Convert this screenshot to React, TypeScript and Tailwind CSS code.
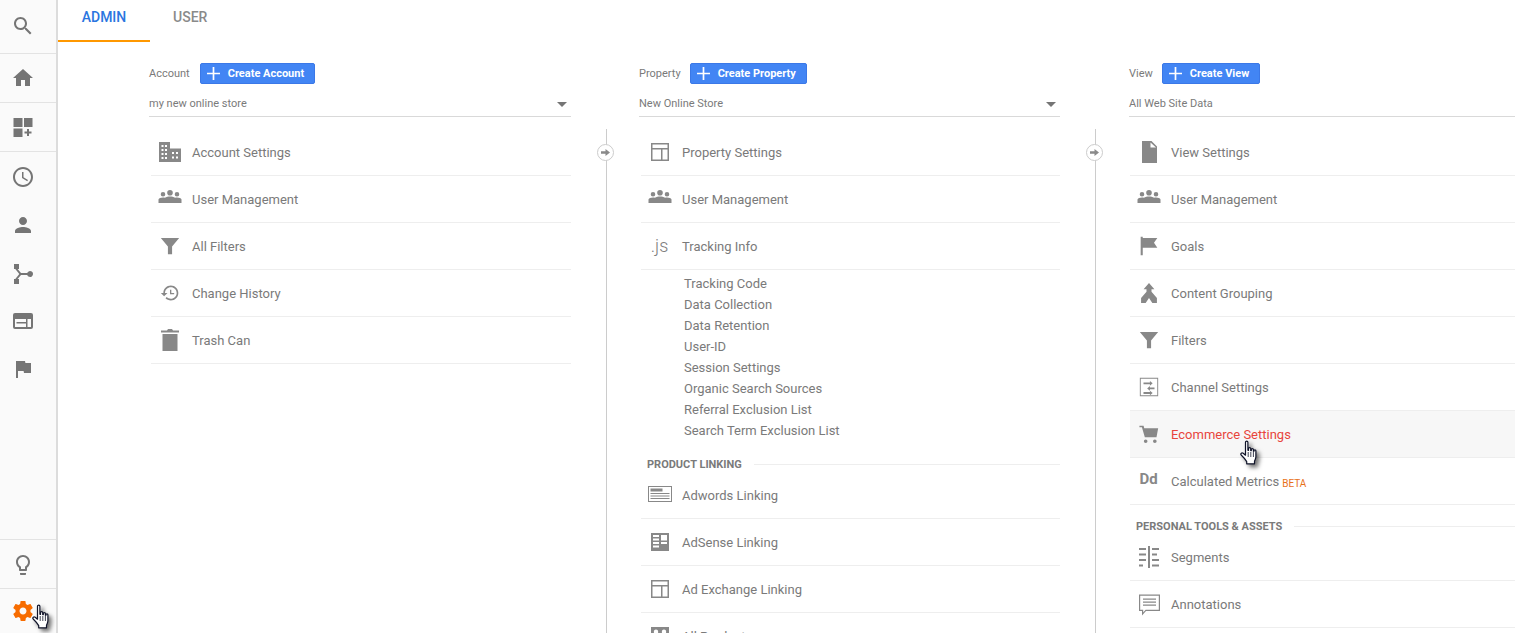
import type { ReactNode } from "react";

const FONT = "font-['Roboto','Liberation_Sans',sans-serif]";

function Icon({ className, children }: { className: string; children: ReactNode }) {
  return (
    <svg viewBox="0 0 24 24" className={className} fill="currentColor">
      {children}
    </svg>
  );
}

function HandCursor({ className }: { className: string }) {
  return (
    <svg viewBox="0 0 20 28" className={className}>
      <path
        d="M6.500 2.200c0-1.500 2.400-1.500 2.400 0v8l.6.1V8.600c0-1.300 2.200-1.300 2.200 0v2l.6.1V9.600c0-1.200 2.100-1.200 2.100 0v1.600l.5.1v-.6c0-1.200 2-1.200 2 0v6.100c0 2-1 3.200-1.400 4.600v2.400H7.700v-2.200C6.500 19.600 4.800 17.600 2.400 15.300 1 13.900 2.600 12.200 4.200 13.200L6.500 15.200z"
        fill="#ffffff"
        stroke="#10142a"
        strokeWidth="1.2"
        strokeLinejoin="round"
      />
      <path d="M9.200 12v5M11.800 12v5M14.400 12v5" stroke="#10142a" strokeWidth="0.8" />
    </svg>
  );
}

const LAYOUT = (
  <path
    fillRule="evenodd"
    d="M3 3h18v18H3zM4.500 4.500v3.500h15V4.500zM4.500 9.500V19.500H13V9.500zM14.500 9.500V19.500h5V9.500z"
  />
);

const icons: Record<string, ReactNode> = {
  building: (
    <path
      fillRule="evenodd"
      d="M1 2h11v6.500h11V22H1zM3.500 5v2h2V5zm3.500 0v2h2V5zM3.500 9v2h2V9zm3.500 0v2h2V9zM3.500 13v2h2v-2zm3.500 0v2h2v-2zM3.500 17v2h2v-2zm3.500 0v2h2v-2zm7-5v2h2v-2zm4 0v2h2v-2zm-4 4.500v2h2v-2zm4 0v2h2v-2z"
    />
  ),
  people: (
    <path d="M5 9.500a2.300 2.300 0 1 1 0-4.600 2.300 2.300 0 0 1 0 4.600zm7-1a2.800 2.800 0 1 1 0-5.600 2.800 2.800 0 0 1 0 5.600zm7 1a2.300 2.300 0 1 1 0-4.600 2.300 2.300 0 0 1 0 4.600zM0.500 16v-3.500c0-1.300 2.500-2 4.500-2 .7 0 1.300.1 1.900.2C8.300 9.800 10.300 9.500 12 9.500s3.700.3 5.100 1.200c.6-.1 1.200-.2 1.900-.2 2 0 4.500.7 4.500 2V16z" />
  ),
  filter: <path d="M1 2.500h22l-8.500 10V22h-5v-9.500z" />,
  history: (
    <path d="M13 3c-4.970 0-9 4.030-9 9H1l3.890 3.890.07.14L9 12H6c0-3.870 3.130-7 7-7s7 3.130 7 7-3.130 7-7 7c-1.930 0-3.680-.79-4.940-2.060l-1.420 1.420C8.270 19.990 10.510 21 13 21c4.970 0 9-4.030 9-9s-4.030-9-9-9zm-1 5v5.500h5v-1.600h-3.400V8z" />
  ),
  trash: <path d="M4.500 6h15v17h-15zM3 2.500h6L10 1h4l1 1.500h6V4.500H3z" />,
  layout: LAYOUT,
  file: <path d="M5 1h9.500L20 6.500V23H5zM13.500 2.500V7.500H19z" fillRule="evenodd" />,
  flag: <path d="M2 1h2.500v1.500L22 2.500l-4 5.500 4 6H4.500V23H2z" />,
  merge: (
    <path d="M12 0l6.500 7.500H15v3l6.500 7.500V24h-5.500L12 18l-4 6H2.500v-6L9 10.500v-3H5.500z" />
  ),
  channel: (
    <>
      <path fillRule="evenodd" d="M2 2h20v20H2zM3 3v18h18V3z" />
      <path d="M6 7h7V5.500l3 2.500-3 2.500V9H6zM18 12.500h-5V11l-3 2.500L13 16v-1.500h5zM6 17.500h7V16l3 2.500-3 2.500V19.500H6z" />
    </>
  ),
  cart: (
    <path d="M0.500 2h5l.8 3H23l-2 11H7L3.500 4H.5zM8 18.500a2.200 2.200 0 1 1 0 4.400 2.200 2.200 0 0 1 0-4.400zm11 0a2.200 2.200 0 1 1 0 4.400 2.200 2.200 0 0 1 0-4.400z" />
  ),
  segments: (
    <path d="M11 1h2v22h-2zM2 3h7v2H2zM2 8.500h7v2H2zM2 14h7v2H2zM2 19.500h4v2H2zM15 3h7v2h-7zM15 8.500h5v2h-5zM15 14h7v2h-7zM15 19.500h7v2h-7z" />
  ),
  note: (
    <path
      fillRule="evenodd"
      d="M2 2.500h21V19H9L5 23.500V19H2zM3.200 3.700V17.800h3V20.500l2.400-2.700H21.800V3.700zM6 6.500h13v1.300H6zM6 9.500h13v1.300H6zM6 12.500h13v1.300H6z"
    />
  ),
  adwords: (
    <path
      fillRule="evenodd"
      d="M0 3h24v16H0zM1 4v14h22V4zM2.500 5.500h12v3h-12zM2.500 10h19v1h-19zM2.500 12.500h19v1h-19zM2.500 15h19v1h-19z"
    />
  ),
  adsense: (
    <path
      fillRule="evenodd"
      d="M3 3h18v18H3zM5 5v2h6V5zM5 8.500v2h6v-2zM5 12v2h6v-2zM5 15.500v2h6v-2zM13 5v5.500h6V5zM13 12v2h6v-2z"
    />
  ),
  products: (
    <path fillRule="evenodd" d="M3 3h18v18H3zM8 5.500a2.200 2.200 0 1 0 0 4.400 2.200 2.200 0 0 0 0-4.400zm8 0a2.200 2.200 0 1 0 0 4.400 2.200 2.200 0 0 0 0-4.400z" />
  ),
};

type Row = { label: string; icon?: ReactNode; active?: boolean; beta?: boolean };

function NavRow({ label, icon, active, beta }: Row) {
  return (
    <div
      className={`flex h-[47px] items-center border-b border-[#eeeeee] pl-px ${active ? "bg-[#f7f7f7]" : ""}`}
    >
      <div className="flex w-[35px] justify-center text-[#888888]">{icon}</div>
      <span className={`ml-[5px] pt-[2px] text-[13px] ${active ? "text-[#e8453c]" : "text-[#7a7a7a]"}`}>
        {label}
      </span>
      {beta && <span className="ml-[3px] mt-[4px] text-[10px] text-[#e8711a]">BETA</span>}
    </div>
  );
}

function Head({
  label,
  button,
  value,
  caret,
  gap = "gap-[10px]",
}: {
  label: string;
  button: string;
  value: string;
  caret?: boolean;
  gap?: string;
}) {
  return (
    <div>
      <div className={`flex h-[21px] items-center ${gap}`}>
        <span className="pt-[2px] text-[11px] text-[#7a7a7a]">{label}</span>
        <button className="flex h-[21px] items-center rounded-[2px] border border-[#3b78e7] bg-[#4285f4] pl-[6px] pr-[10px] text-[11px] font-bold text-white">
          <svg viewBox="0 0 13 13" className="mr-[8px] h-[13px] w-[13px]" stroke="#ffffff" strokeWidth="1.700">
            <path d="M6.500 0v13M0 6.500h13" />
          </svg>
          <span className="pt-[2px]">{button}</span>
        </button>
      </div>
      <div className="mt-[9px] flex h-[24px] items-center justify-between border-b border-[#d9d9d9] pr-[4px]">
        <span className="text-[11px] text-[#7a7a7a]">{value}</span>
        {caret && <div className="h-0 w-0 border-x-[5px] border-t-[5px] border-x-transparent border-t-[#757575]" />}
      </div>
    </div>
  );
}

function SectionLabel({ label, className }: { label: string; className: string }) {
  return (
    <div className={`flex items-center gap-[12px] pl-[6px] ${className}`}>
      <span className="whitespace-nowrap text-[11px] font-bold leading-none text-[#7a7a7a]">{label}</span>
      <div className="h-px flex-1 bg-[#eeeeee]" />
    </div>
  );
}

function Connector() {
  return (
    <div className="relative mt-[129px] w-[68px] shrink-0">
      <div className="ml-[35px] h-[504px] w-px bg-[#cccccc]" />
      <div className="absolute left-[26px] top-[15px] flex h-[17px] w-[17px] items-center justify-center rounded-full border border-[#cccccc] bg-white">
        <svg viewBox="0 0 10 10" className="h-[9px] w-[9px]" fill="#8a8a8a">
          <path d="M0 3.500h5V1l5 4-5 4V6.500H0z" />
        </svg>
      </div>
    </div>
  );
}

const big = "h-[24px] w-[24px]";
const mid = "h-[20px] w-[20px]";

function SideIcon({ className, children }: { className: string; children: ReactNode }) {
  return <div className={`flex items-center justify-center pr-[10px] ${className}`}>{children}</div>;
}

export default function App() {
  const sub = [
    "Tracking Code",
    "Data Collection",
    "Data Retention",
    "User-ID",
    "Session Settings",
    "Organic Search Sources",
    "Referral Exclusion List",
    "Search Term Exclusion List",
  ];

  return (
    <div className={`flex h-[633px] w-[1515px] overflow-hidden bg-white ${FONT}`}>
      <aside className="relative flex h-full w-[58px] shrink-0 flex-col border-r-2 border-[#dcdcdc] bg-[#fafafa] text-[#757575]">
        <SideIcon className="h-[54px] border-b border-[#e3e3e3] pb-[2px]">
          <Icon className={big}>
            <path d="M15.500 14h-.79l-.28-.27C15.410 12.590 16 11.110 16 9.500 16 5.910 13.090 3 9.500 3S3 5.910 3 9.500 5.910 16 9.500 16c1.610 0 3.090-.59 4.230-1.570l.27.28v.79l5 4.990L20.490 19l-4.990-5zm-6 0C7.010 14 5 11.990 5 9.500S7.010 5 9.500 5 14 7.010 14 9.500 11.990 14 9.500 14z" />
          </Icon>
        </SideIcon>
        <SideIcon className="h-[49px] border-b border-[#e3e3e3]">
          <Icon className={big}>
            <path d="M10 20v-6h4v6h5v-8h3L12 3 2 12h3v8z" />
          </Icon>
        </SideIcon>
        <SideIcon className="h-[49px] border-b border-[#e3e3e3]">
          <Icon className={big}>
            <path d="M2.500 3h9v9h-9zM13 3h8.500v9H13zM2.500 13.500h9V22h-9zM16 14h2v2.500h2.500v2H18V21h-2v-2.500h-2.500v-2H16z" />
          </Icon>
        </SideIcon>
        <SideIcon className="h-[49px]">
          <Icon className={big}>
            <path d="M11.990 2C6.470 2 2 6.480 2 12s4.470 10 9.990 10C17.520 22 22 17.520 22 12S17.520 2 11.990 2zM12 20c-4.420 0-8-3.580-8-8s3.580-8 8-8 8 3.580 8 8-3.580 8-8 8z" />
            <path d="M12.500 7H11v6l5.250 3.150.75-1.230-4.500-2.670z" />
          </Icon>
        </SideIcon>
        <SideIcon className="h-[48px]">
          <Icon className={big}>
            <path d="M12 12c2.210 0 4-1.790 4-4s-1.790-4-4-4-4 1.790-4 4 1.790 4 4 4zm0 2c-2.670 0-8 1.340-8 4v2h16v-2c0-2.660-5.330-4-8-4z" />
          </Icon>
        </SideIcon>
        <SideIcon className="h-[48px]">
          <Icon className={big}>
            <path d="M3 3h5v5H6.600L10 12h6.200a3 3 0 1 1 0 2H10l-3.400 4H8v5H3v-5h1.300l4-5-4-5H3z" />
          </Icon>
        </SideIcon>
        <SideIcon className="h-[48px]">
          <Icon className={big}>
            <path
              fillRule="evenodd"
              d="M4 4h16a2 2 0 0 1 2 2v12a2 2 0 0 1-2 2H4a2 2 0 0 1-2-2V6a2 2 0 0 1 2-2zM4 10v8h11v-3.500H5.500V13H15v-3zM16.500 10v8H20v-8z"
            />
          </Icon>
        </SideIcon>
        <SideIcon className="h-[48px]">
          <Icon className={big}>
            <path d="M14.400 6L14 4H5v17h2v-7h5.600l.4 2h7V6z" />
          </Icon>
        </SideIcon>
        <div className="flex-1 border-b border-[#e3e3e3]" />
        <SideIcon className="h-[49px] border-b border-[#e3e3e3] pt-[2px]">
          <Icon className={big}>
            <path d="M9 21c0 .55.45 1 1 1h4c.55 0 1-.45 1-1v-1H9v1zm3-19C8.140 2 5 5.140 5 9c0 2.380 1.190 4.470 3 5.740V17c0 .55.45 1 1 1h6c.55 0 1-.45 1-1v-2.260c1.810-1.270 3-3.360 3-5.740 0-3.860-3.140-7-7-7zm2.850 11.100l-.85.6V16h-4v-2.300l-.85-.6C7.800 12.160 7 10.630 7 9c0-2.760 2.240-5 5-5s5 2.240 5 5c0 1.630-.8 3.160-2.150 4.100z" />
          </Icon>
        </SideIcon>
        <SideIcon className="h-[44px] text-[#f76c00]">
          <Icon className={big}>
            <path d="M19.430 12.980c.04-.32.07-.64.07-.98s-.03-.66-.07-.98l2.110-1.650c.19-.15.24-.42.12-.64l-2-3.460c-.12-.22-.39-.3-.61-.22l-2.490 1c-.52-.4-1.080-.73-1.690-.98l-.38-2.650C14.460 2.180 14.250 2 14 2h-4c-.25 0-.46.18-.49.42l-.38 2.650c-.61.25-1.170.59-1.690.98l-2.490-1c-.23-.09-.49 0-.61.22l-2 3.460c-.13.22-.07.49.12.64l2.110 1.650c-.04.32-.07.65-.07.98s.03.66.07.98l-2.110 1.650c-.19.15-.24.42-.12.64l2 3.460c.12.22.39.3.61.22l2.490-1c.52.4 1.080.73 1.690.98l.38 2.650c.03.24.24.42.49.42h4c.25 0 .46-.18.49-.42l.38-2.650c.61-.25 1.170-.59 1.690-.98l2.490 1c.23.09.49 0 .61-.22l2-3.460c.12-.22.07-.49-.12-.64l-2.110-1.650zM12 15.500c-1.930 0-3.500-1.570-3.500-3.500s1.570-3.500 3.500-3.500 3.500 1.570 3.500 3.500-1.570 3.500-3.500 3.500z" />
          </Icon>
        </SideIcon>
        <HandCursor className="absolute left-[31px] top-[604px] z-10 h-[28px] w-[20px] drop-shadow-[3px_3px_2px_rgba(0,0,0,0.55)]" />
      </aside>

      <main className="min-w-0 flex-1">
        <div className="flex h-[42px] text-[14px] font-medium">
          <div className="flex w-[92px] items-start justify-center border-b-2 border-[#ff9800] pt-[7px] text-[#2a75e0]">
            ADMIN
          </div>
          <div className="ml-[23px] pt-[7px] text-[#8a8a8a]">USER</div>
        </div>

        <div className="relative flex pl-[91px]">
          <section className="w-[422px] shrink-0 pt-[21px]">
            <Head label="Account" button="Create Account" value="my new online store" caret />
            <div className="mt-[12px] pl-[2px]">
              <NavRow label="Account Settings" icon={<Icon className={big}>{icons.building}</Icon>} />
              <NavRow label="User Management" icon={<Icon className={big}>{icons.people}</Icon>} />
              <NavRow label="All Filters" icon={<Icon className={mid}>{icons.filter}</Icon>} />
              <NavRow label="Change History" icon={<Icon className={mid}>{icons.history}</Icon>} />
              <NavRow label="Trash Can" icon={<Icon className={big}>{icons.trash}</Icon>} />
            </div>
          </section>

          <div className="-mt-[42px]">
            <Connector />
          </div>

          <section className="w-[421px] shrink-0 pt-[21px]">
            <Head label="Property" button="Create Property" value="New Online Store" caret gap="gap-[9px]" />
            <div className="mt-[12px] pl-[2px]">
              <NavRow label="Property Settings" icon={<Icon className={big}>{icons.layout}</Icon>} />
              <NavRow label="User Management" icon={<Icon className={big}>{icons.people}</Icon>} />
              <NavRow
                label="Tracking Info"
                icon={<span className="text-[18px] font-light leading-none text-[#808080]">.js</span>}
              />
              <ul className="pb-[5px] pl-[43px] pt-[3px] text-[13px] leading-[21px] text-[#7a7a7a]">
                {sub.map((s) => (
                  <li key={s}>{s}</li>
                ))}
              </ul>
              <SectionLabel label="PRODUCT LINKING" className="h-[26px] pt-[10px]" />
              <NavRow label="Adwords Linking" icon={<Icon className={big}>{icons.adwords}</Icon>} />
              <NavRow label="AdSense Linking" icon={<Icon className={big}>{icons.adsense}</Icon>} />
              <NavRow label="Ad Exchange Linking" icon={<Icon className={big}>{icons.layout}</Icon>} />
              <NavRow label="All Products" icon={<Icon className={big}>{icons.products}</Icon>} />
            </div>
          </section>

          <div className="-mt-[42px]">
            <Connector />
          </div>

          <section className="min-w-0 flex-1 pl-px pt-[21px]">
            <Head label="View" button="Create View" value="All Web Site Data" gap="gap-[9px]" />
            <div className="mt-[12px] pl-px">
              <NavRow label="View Settings" icon={<Icon className={big}>{icons.file}</Icon>} />
              <NavRow label="User Management" icon={<Icon className={big}>{icons.people}</Icon>} />
              <NavRow label="Goals" icon={<Icon className={mid}>{icons.flag}</Icon>} />
              <NavRow label="Content Grouping" icon={<Icon className={mid}>{icons.merge}</Icon>} />
              <NavRow label="Filters" icon={<Icon className={mid}>{icons.filter}</Icon>} />
              <NavRow label="Channel Settings" icon={<Icon className="h-[22px] w-[22px]">{icons.channel}</Icon>} />
              <NavRow label="Ecommerce Settings" active icon={<Icon className={mid}>{icons.cart}</Icon>} />
              <NavRow
                label="Calculated Metrics"
                beta
                icon={<span className="-mt-[4px] text-[15px] font-bold leading-none text-[#888888]">Dd</span>}
              />
              <SectionLabel label="PERSONAL TOOLS & ASSETS" className="h-[29px] pt-[13px]" />
              <NavRow label="Segments" icon={<Icon className={big}>{icons.segments}</Icon>} />
              <NavRow label="Annotations" icon={<Icon className={big}>{icons.note}</Icon>} />
            </div>
            <HandCursor className="absolute left-[1181px] top-[398px] z-10 h-[28px] w-[20px] drop-shadow-[3px_3px_2px_rgba(0,0,0,0.55)]" />
          </section>
        </div>
      </main>
    </div>
  );
}
